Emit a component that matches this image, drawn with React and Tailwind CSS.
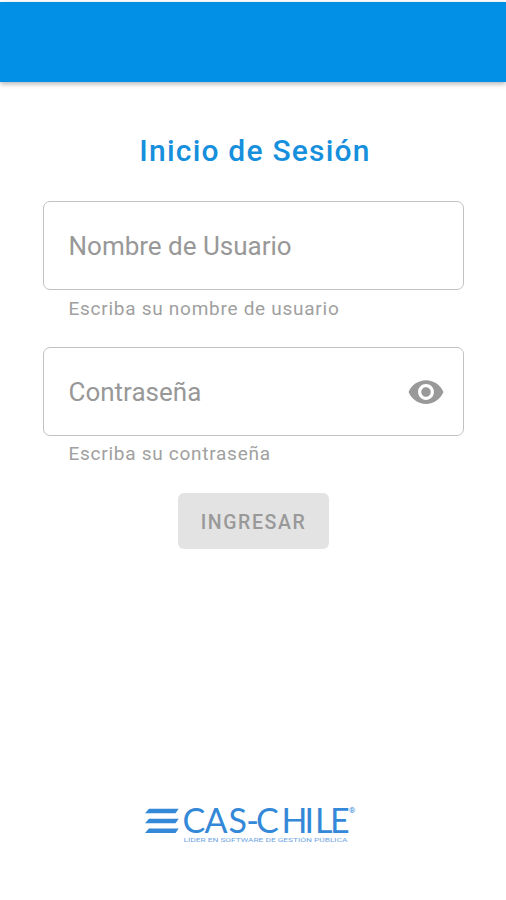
function Field({ label, helper, icon, labelClass, helperClass }) {
  return (
    <div className="h-[146px]">
      <div className="flex h-[89px] items-center justify-between rounded-[7px] border-[1.5px] border-[#c2c2c2] pl-[25px] pr-[18px]">
        <span className={`text-[26px] leading-none text-[#989898] ${labelClass}`}>{label}</span>
        {icon}
      </div>
      <p className={`pl-[26px] text-[19px] leading-[24px] text-[#a0a0a0] ${helperClass}`}>{helper}</p>
    </div>
  );
}

function EyeIcon() {
  return (
    <svg className="h-[38px] w-[38px]" viewBox="0 0 24 24" fill="#999999">
      <path d="M12 4.500C7 4.500 2.730 7.610 1 12c1.730 4.390 6 7.500 11 7.500s9.270-3.110 11-7.500c-1.730-4.390-6-7.500-11-7.500zM12 17c-2.760 0-5-2.240-5-5s2.240-5 5-5 5 2.240 5 5-2.240 5-5 5zm0-8c-1.660 0-3 1.340-3 3s1.340 3 3 3 3-1.340 3-3-1.340-3-3-3z" />
    </svg>
  );
}

function Logo() {
  return (
    <svg className="h-[60px] w-[230px] overflow-visible" viewBox="0 0 230 60" fill="#3488d8">
      <path d="M9 9.800H38.700L35.500 14.200H5z M9 19.800H38.700L35.500 24.200H5z M9 29.500H38.700L35.500 34H5z" />
      <text x="42.500 64.500 88.500 106.200 116 141.500 164.500 175 190" y="34" fontSize="34" fontFamily="Lato, sans-serif">CAS-CHILE</text>
      <text x="43.500" y="43.300" fontSize="6" fontFamily="Roboto, sans-serif" fill="#6fa6e2" textLength="164" lengthAdjust="spacingAndGlyphs">LÍDER EN SOFTWARE DE GESTIÓN PÚBLICA</text>
      <text x="209" y="14" fontSize="8" fontFamily="Roboto, sans-serif">®</text>
    </svg>
  );
}

export default function App() {
  return (
    <div className="flex h-[900px] w-[506px] flex-col bg-white pt-[2px] font-['Roboto',sans-serif]">
      <header className="h-[80px] shrink-0 bg-[#0190e6] shadow-[0_2px_5px_rgba(0,0,0,0.3)]" />
      <main className="flex grow flex-col px-[42.500px] pt-[51px]">
        <h1 className="h-[68px] pl-[4px] text-center text-[30px] font-medium leading-[36px] tracking-[1.200px] text-[#168fdd]">Inicio de Sesión</h1>
        <Field label="Nombre de Usuario" helper="Escriba su nombre de usuario" labelClass="tracking-[0px]" helperClass="pt-[7px] tracking-[0.730px]" />
        <Field label="Contraseña" helper="Escriba su contraseña" labelClass="tracking-[0px]" helperClass="pt-[6px] tracking-[0.730px]" icon={<EyeIcon />} />
        <button className="ml-[1px] h-[56px] w-[151px] self-center rounded-[6px] bg-[#e3e3e3] pt-[4px] text-[19.500px] font-medium tracking-[1.600px] text-[#999999]">INGRESAR</button>
      </main>
      <footer className="flex h-[101px] shrink-0 pl-[140px]">
        <Logo />
      </footer>
    </div>
  );
}
